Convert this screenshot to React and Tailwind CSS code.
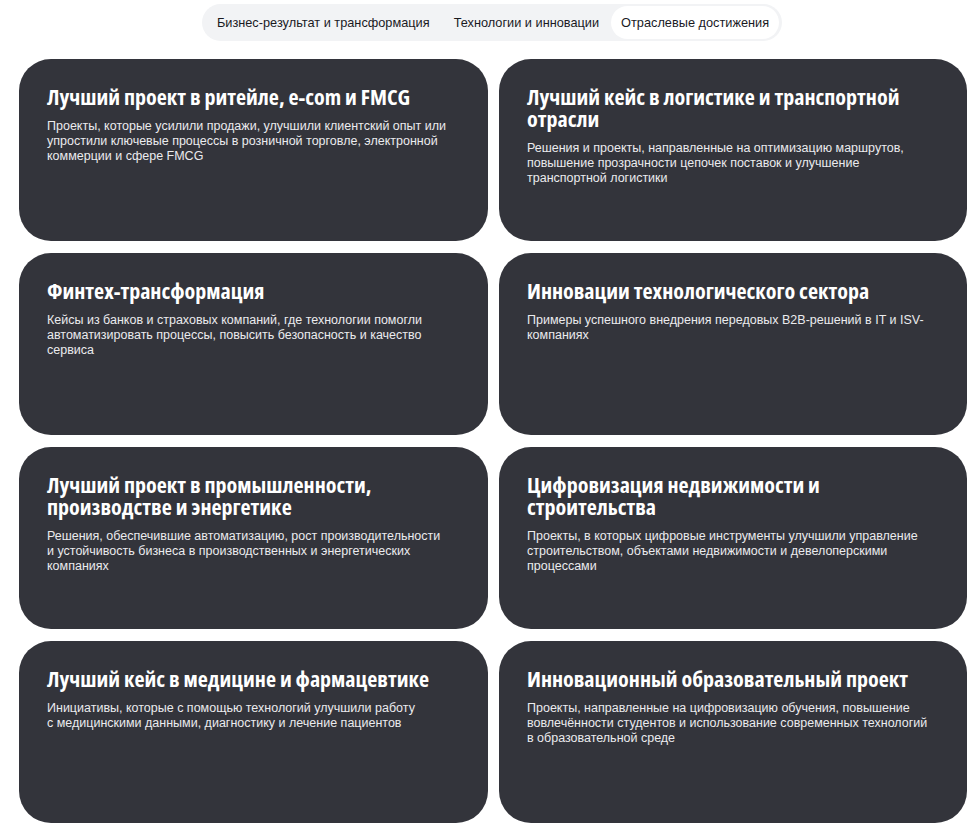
import React from "react";

const tabs = [
  { label: "Бизнес-результат и трансформация", active: false },
  { label: "Технологии и инновации", active: false },
  { label: "Отраслевые достижения", active: true },
];

const cards = [
  {
    title: ["Лучший проект в ритейле, e-com и FMCG"],
    text: [
      "Проекты, которые усилили продажи, улучшили клиентский опыт или",
      "упростили ключевые процессы в розничной торговле, электронной",
      "коммерции и сфере FMCG",
    ],
  },
  {
    title: ["Лучший кейс в логистике и транспортной", "отрасли"],
    text: [
      "Решения и проекты, направленные на оптимизацию маршрутов,",
      "повышение прозрачности цепочек поставок и улучшение",
      "транспортной логистики",
    ],
  },
  {
    title: ["Финтех-трансформация"],
    text: [
      "Кейсы из банков и страховых компаний, где технологии помогли",
      "автоматизировать процессы, повысить безопасность и качество",
      "сервиса",
    ],
  },
  {
    title: ["Инновации технологического сектора"],
    text: [
      "Примеры успешного внедрения передовых B2B-решений в IT и ISV-",
      "компаниях",
    ],
  },
  {
    title: ["Лучший проект в промышленности,", "производстве и энергетике"],
    text: [
      "Решения, обеспечившие автоматизацию, рост производительности",
      "и устойчивость бизнеса в производственных и энергетических",
      "компаниях",
    ],
  },
  {
    title: ["Цифровизация недвижимости и", "строительства"],
    text: [
      "Проекты, в которых цифровые инструменты улучшили управление",
      "строительством, объектами недвижимости и девелоперскими",
      "процессами",
    ],
  },
  {
    title: ["Лучший кейс в медицине и фармацевтике"],
    text: [
      "Инициативы, которые с помощью технологий улучшили работу",
      "с медицинскими данными, диагностику и лечение пациентов",
    ],
  },
  {
    title: ["Инновационный образовательный проект"],
    text: [
      "Проекты, направленные на цифровизацию обучения, повышение",
      "вовлечённости студентов и использование современных технологий",
      "в образовательной среде",
    ],
  },
];

function Lines({ lines }) {
  return lines.map((line, i) => (
    <span key={i} className="block whitespace-nowrap">
      {line}
    </span>
  ));
}

export default function App() {
  return (
    <div className="min-h-[831px] w-[980px] bg-white font-['Liberation_Sans',sans-serif]">
      <div className="flex justify-center pt-[4px]">
        <div className="ml-[4px] flex h-[37px] items-center rounded-full bg-[#f2f3f5] px-[3px]">
          {tabs.map((t) => (
            <div
              key={t.label}
              className={
                t.active
                  ? "flex h-[33px] items-center rounded-full bg-white px-[10px] text-[12.75px] text-[#1a1a1f]"
                  : "flex h-[33px] items-center rounded-full px-[12px] text-[12.75px] text-[#1a1a1f]"
              }
            >
              {t.label}
            </div>
          ))}
        </div>
      </div>

      <div className="mt-[18px] grid grid-cols-[469px_468px] gap-x-[11px] gap-y-[12px] pl-[19px]">
        {cards.map((c, i) => (
          <div
            key={i}
            className="h-[182px] rounded-[32px] bg-[#33343b] px-[28px] pt-[26px] text-white"
          >
            <h3 className="font-['Open_Sans',sans-serif] text-[22px] font-bold leading-[22px] font-stretch-[75%]">
              <Lines lines={c.title} />
            </h3>
            <p className="mt-[12px] text-[12.5px] leading-[15px] text-[#ebebee]">
              <Lines lines={c.text} />
            </p>
          </div>
        ))}
      </div>
    </div>
  );
}
